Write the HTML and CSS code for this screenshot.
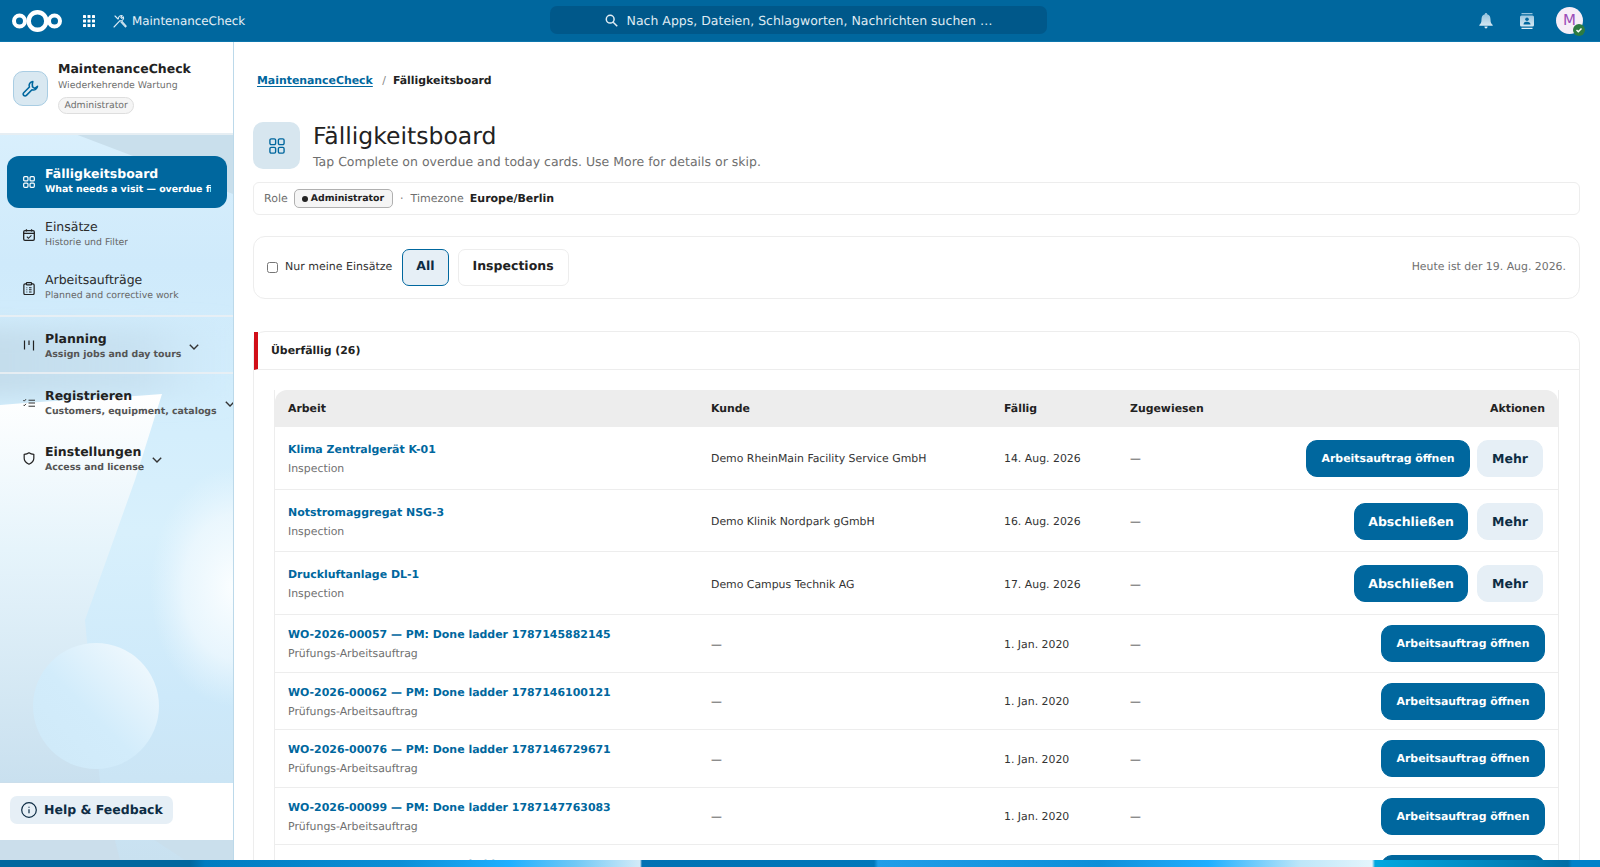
FILE: index.html
```html
<!DOCTYPE html>
<html lang="de">
<head>
<meta charset="utf-8">
<title>Fälligkeitsboard - MaintenanceCheck</title>
<link rel="stylesheet" href="styles.css">
</head>
<body>
<header class="topbar">
  <div class="top-left">
    <svg class="logo" width="52" height="26" viewBox="0 0 52 26"><g fill="none" stroke="#fff"><circle cx="8.500" cy="13" r="5.500" stroke-width="4"/><circle cx="26.500" cy="13" r="8.800" stroke-width="4.400"/><circle cx="43.500" cy="13" r="5.500" stroke-width="4"/></g></svg>
    <svg class="apps" width="12" height="12" viewBox="0 0 12 12" fill="#fff"><rect width="3" height="3" rx=".6"/><rect x="4.500" width="3" height="3" rx=".6"/><rect x="9" width="3" height="3" rx=".6"/><rect y="4.500" width="3" height="3" rx=".6"/><rect x="4.500" y="4.500" width="3" height="3" rx=".6"/><rect x="9" y="4.500" width="3" height="3" rx=".6"/><rect y="9" width="3" height="3" rx=".6"/><rect x="4.500" y="9" width="3" height="3" rx=".6"/><rect x="9" y="9" width="3" height="3" rx=".6"/></svg>
    <span class="app-name">
      <svg width="14" height="14" viewBox="0 0 14 14" fill="none" stroke="#dcebf4" stroke-width="1.100" stroke-linecap="round" stroke-linejoin="round"><path d="M1 13 7 6.600M5.400 4.600a3 3 0 0 1 3.900-2.900L7.800 3.400l1 1 1.600-1.500a3 3 0 0 1-3 4"/><path d="M8 8.200 12.400 13l.8-.8L9 7.400M2 2l3 3"/></svg>
      MaintenanceCheck
    </span>
  </div>
  <div class="search">
    <svg width="13" height="13" viewBox="0 0 14 14" fill="none" stroke="#e3eef5" stroke-width="1.600"><circle cx="5.600" cy="5.600" r="4.200"/><path d="m8.800 8.800 4.400 4.400"/></svg>
    <span>Nach Apps, Dateien, Schlagworten, Nachrichten suchen …</span>
  </div>
  <div class="top-right">
    <svg width="14" height="16" viewBox="0 0 14 16"><defs><linearGradient id="fade" x1="0" y1="0" x2="0" y2="1"><stop offset="0" stop-color="#8fc0dc"/><stop offset="1" stop-color="#e4f0f7"/></linearGradient></defs><path fill="url(#fade)" d="M7 0c.8 0 1.200.5 1.200 1.200C10.600 1.800 11.500 3.800 11.500 6.500c0 3 .8 4.300 2.200 5.500v.8H.3V12c1.400-1.200 2.200-2.500 2.200-5.500 0-2.700.9-4.700 3.300-5.300C5.800.5 6.200 0 7 0ZM5.400 13.600h3.200C8.500 14.900 7.800 15.500 7 15.500s-1.500-.6-1.600-1.900Z"/></svg>
    <svg width="14" height="16" viewBox="0 0 14 16"><defs><linearGradient id="fade2" x1="0" y1="0" x2="0" y2="1"><stop offset="0" stop-color="#8fc0dc"/><stop offset="1" stop-color="#e4f0f7"/></linearGradient></defs><path fill="url(#fade2)" d="M1.500 0h11v1.300h-11zM1.500 2.600h11A1.500 1.500 0 0 1 14 4.100v7.800a1.500 1.500 0 0 1-1.500 1.500h-11A1.500 1.500 0 0 1 0 11.900V4.100a1.500 1.500 0 0 1 1.500-1.500ZM1.500 14.700h11V16h-11z"/><circle cx="7" cy="6.200" r="1.800" fill="#00679e"/><path d="M3.500 11.500c0-1.900 1.600-2.800 3.500-2.800s3.500.9 3.500 2.800z" fill="#00679e"/></svg>
    <div class="avatar">M<span class="status"><svg width="8" height="8" viewBox="0 0 8 8" fill="none" stroke="#fff" stroke-width="1.400"><path d="m1.500 4 1.800 1.800 3.200-3.400"/></svg></span></div>
  </div>
</header>

<div class="content">
  <aside class="sidebar">
    <svg class="sidebar-art" viewBox="0 0 233 818" preserveAspectRatio="none" aria-hidden="true">
      <defs>
        <linearGradient id="sb" x1="0" y1="0" x2="0" y2="1"><stop offset="0" stop-color="#e0f3fd"/><stop offset=".27" stop-color="#cfeafb"/><stop offset=".42" stop-color="#d2edfc"/><stop offset=".6" stop-color="#d8f0fc"/><stop offset=".8" stop-color="#cde9fa"/><stop offset="1" stop-color="#c9e1f0"/></linearGradient>
        <radialGradient id="lobe"><stop offset="0" stop-color="#fbfeff"/><stop offset=".6" stop-color="#f0f9fe" stop-opacity=".75"/><stop offset="1" stop-color="#e8f6fe" stop-opacity="0"/></radialGradient>
        <linearGradient id="sw" x1="0" y1="0" x2="0" y2="1"><stop offset="0" stop-color="#ffffff"/><stop offset=".4" stop-color="#e6f4fb"/><stop offset="1" stop-color="#c9e0ef"/></linearGradient>
        <linearGradient id="sc" x1="1" y1="0" x2="0" y2="1"><stop offset="0" stop-color="#f6fbfe"/><stop offset=".55" stop-color="#d2ecfb"/><stop offset="1" stop-color="#cfe9f8"/></linearGradient>
        <linearGradient id="band" x1="0" y1="0" x2="1" y2="0"><stop offset="0" stop-color="#c3dceb"/><stop offset=".65" stop-color="#c6dfef" stop-opacity=".8"/><stop offset="1" stop-color="#cfe9f9" stop-opacity=".1"/></linearGradient>
        <filter id="soft" x="-20%" y="-40%" width="140%" height="180%"><feGaussianBlur stdDeviation="11"/></filter>
      </defs>
      <rect width="233" height="818" fill="url(#sb)"/>
      <ellipse cx="235" cy="545" rx="85" ry="120" fill="url(#lobe)"/>
      <path d="M75 92 233 152V92Z" fill="#c9dfec"/>
      <path d="M-30 285H233V355H-30Z" fill="url(#band)" filter="url(#soft)"/>
      <path d="M0 363C60 358 110 356 162 352L135 438 85 578 100 740H0Z" fill="url(#sw)"/>
      <circle cx="96" cy="664" r="63" fill="url(#sc)"/>
      <path d="M0 740H100L120 818H0Z" fill="#cbdeeb"/>
      <path d="M150 795 185 818H233V795Z" fill="#cadfec"/>
    </svg>

    <div class="brand">
      <div class="brand-icon"><svg width="17" height="17" viewBox="0 0 17 17" fill="none" stroke="#00679e" stroke-width="1.600" stroke-linejoin="round"><path d="M10.800 1.500a4 4 0 0 0-3.400 5.500L1.700 12.700a1.900 1.900 0 0 0 2.700 2.700L10 9.700a4 4 0 0 0 5.500-3.400l-2.800 2-2.200-1.500-.2-2.700z"/></svg></div>
      <div class="brand-text">
        <div class="brand-title">MaintenanceCheck</div>
        <div class="brand-sub">Wiederkehrende Wartung</div>
        <span class="brand-pill">Administrator</span>
      </div>
    </div>

    <nav class="nav">
      <a class="nav-item active">
        <svg class="nav-icon" height="12" viewBox="0 0 14 14" fill="none" stroke="currentColor" stroke-width="1.400"><rect x=".8" y=".8" width="5" height="5" rx="1.200"/><rect x="8.200" y=".8" width="5" height="5" rx="1.200"/><rect x=".8" y="8.200" width="5" height="5" rx="1.200"/><rect x="8.200" y="8.200" width="5" height="5" rx="1.200"/></svg>
        <span class="nav-text"><b>Fälligkeitsboard</b><small>What needs a visit — overdue first</small></span>
      </a>
      <a class="nav-item">
        <svg class="nav-icon" height="12" viewBox="0 0 14 14" fill="none" stroke="currentColor" stroke-width="1.500"><rect x=".8" y="2" width="12.400" height="11.200" rx="1.500"/><path d="M.8 5.200h12.400M4 .3v2.600M10 .3v2.600"/><path d="m4.500 9 1.800 1.800L9.800 7.500" stroke-width="1.200"/></svg>
        <span class="nav-text"><span class="nav-title">Einsätze</span><small>Historie und Filter</small></span>
      </a>
      <a class="nav-item">
        <svg class="nav-icon" height="13" viewBox="0 0 14 15" fill="none" stroke="currentColor" stroke-width="1.400"><path d="M4 2H2.500A1.500 1.500 0 0 0 1 3.500v9.500A1.500 1.500 0 0 0 2.500 14.500h9a1.500 1.500 0 0 0 1.500-1.500V3.500A1.500 1.500 0 0 0 11.500 2H10"/><rect x="4" y=".7" width="6" height="2.600" rx=".8"/><path d="M4 6.500h1M7 6.500h3M4 9h1M7 9h3M4 11.500h1M7 11.500h3" stroke-width="1.200"/></svg>
        <span class="nav-text"><span class="nav-title">Arbeitsaufträge</span><small>Planned and corrective work</small></span>
      </a>
      <a class="nav-group sep">
        <svg class="nav-icon" height="11" viewBox="0 0 11 11" fill="none" stroke="currentColor" stroke-width="1.200"><path d="M1 .5v9M5.500.5v4.500M10 .5v10"/></svg>
        <span class="nav-text"><b>Planning</b><small>Assign jobs and day tours</small></span>
        <svg class="chev" width="10" height="6" viewBox="0 0 10 6" fill="none" stroke="currentColor" stroke-width="1.400"><path d="m.8.8 4.200 4.200L9.200.8"/></svg>
      </a>
      <a class="nav-group sep">
        <svg class="nav-icon" height="10" viewBox="0 0 13 9" fill="none" stroke="currentColor" stroke-width="1"><path d="m.4 1.500 1 1L3.200.4M.4 6.500l1 1 1.800-2.100M6 1.500h7M6 4.500h7M6 8h7"/></svg>
        <span class="nav-text"><b>Registrieren</b><small>Customers, equipment, catalogs</small></span>
        <svg class="chev" width="10" height="6" viewBox="0 0 10 6" fill="none" stroke="currentColor" stroke-width="1.400"><path d="m.8.8 4.200 4.200L9.200.8"/></svg>
      </a>
      <a class="nav-group">
        <svg class="nav-icon" height="13" viewBox="0 0 12 14" fill="none" stroke="currentColor" stroke-width="1.300" stroke-linejoin="round"><path d="M6 .8c1.500 1.100 3.200 1.600 5.200 1.700v4.300c0 3-2 5-5.200 6.400C2.800 11.800.8 9.800.8 6.800V2.500C2.800 2.400 4.500 1.900 6 .8Z"/></svg>
        <span class="nav-text"><b>Einstellungen</b><small>Access and license</small></span>
        <svg class="chev" width="10" height="6" viewBox="0 0 10 6" fill="none" stroke="currentColor" stroke-width="1.400"><path d="m.8.8 4.200 4.200L9.200.8"/></svg>
      </a>
    </nav>

    <div class="help">
      <a class="help-btn">
        <svg width="16" height="16" viewBox="0 0 16 16" fill="none" stroke="#0d2c44" stroke-width="1.200"><circle cx="8" cy="8" r="7.300"/><path d="M8 7.200v4M8 4.700v1.100"/></svg>
        Help &amp; Feedback
      </a>
    </div>
  </aside>

  <main class="main">
    <div class="crumbs"><a class="crumb-link">MaintenanceCheck</a><span class="crumb-sep">/</span><b>Fälligkeitsboard</b></div>

    <div class="page-head">
      <div class="page-icon"><svg width="16" height="16" viewBox="0 0 14 14" fill="none" stroke="#00679e" stroke-width="1.200"><rect x=".8" y=".8" width="5" height="5" rx="1.200"/><rect x="8.200" y=".8" width="5" height="5" rx="1.200"/><rect x=".8" y="8.200" width="5" height="5" rx="1.200"/><rect x="8.200" y="8.200" width="5" height="5" rx="1.200"/></svg></div>
      <div>
        <h1>Fälligkeitsboard</h1>
        <p>Tap Complete on overdue and today cards. Use More for details or skip.</p>
      </div>
    </div>

    <div class="role-bar">
      <span class="muted">Role</span>
      <span class="role-pill"><i></i>Administrator</span>
      <span class="muted dot">·</span>
      <span class="muted">Timezone</span>
      <b>Europe/Berlin</b>
    </div>

    <div class="filter-card">
      <label class="check"><input type="checkbox"><span>Nur meine Einsätze</span></label>
      <button class="tab on">All</button>
      <button class="tab">Inspections</button>
      <span class="today">Heute ist der 19. Aug. 2026.</span>
    </div>

    <section class="section">
      <h2>Überfällig (26)</h2>
      <div class="table-wrap">
        <table>
          <colgroup><col class="c1"><col class="c2"><col class="c3"><col class="c4"><col></colgroup>
          <thead><tr><th>Arbeit</th><th>Kunde</th><th>Fällig</th><th>Zugewiesen</th><th class="right">Aktionen</th></tr></thead>
          <tbody>
            <tr class="tall">
              <td><a class="job">Klima Zentralgerät K-01</a><span class="kind">Inspection</span></td>
              <td>Demo RheinMain Facility Service GmbH</td><td>14. Aug. 2026</td><td>—</td>
              <td class="right"><button class="btn small">Arbeitsauftrag öffnen</button><button class="btn more">Mehr</button></td>
            </tr>
            <tr class="tall">
              <td><a class="job">Notstromaggregat NSG-3</a><span class="kind">Inspection</span></td>
              <td>Demo Klinik Nordpark gGmbH</td><td>16. Aug. 2026</td><td>—</td>
              <td class="right"><button class="btn">Abschließen</button><button class="btn more">Mehr</button></td>
            </tr>
            <tr class="tall">
              <td><a class="job">Druckluftanlage DL-1</a><span class="kind">Inspection</span></td>
              <td>Demo Campus Technik AG</td><td>17. Aug. 2026</td><td>—</td>
              <td class="right"><button class="btn">Abschließen</button><button class="btn more">Mehr</button></td>
            </tr>
            <tr>
              <td><a class="job">WO-2026-00057 — PM: Done ladder 1787145882145</a><span class="kind">Prüfungs-Arbeitsauftrag</span></td>
              <td>—</td><td>1. Jan. 2020</td><td>—</td>
              <td class="right"><button class="btn small">Arbeitsauftrag öffnen</button></td>
            </tr>
            <tr>
              <td><a class="job">WO-2026-00062 — PM: Done ladder 1787146100121</a><span class="kind">Prüfungs-Arbeitsauftrag</span></td>
              <td>—</td><td>1. Jan. 2020</td><td>—</td>
              <td class="right"><button class="btn small">Arbeitsauftrag öffnen</button></td>
            </tr>
            <tr>
              <td><a class="job">WO-2026-00076 — PM: Done ladder 1787146729671</a><span class="kind">Prüfungs-Arbeitsauftrag</span></td>
              <td>—</td><td>1. Jan. 2020</td><td>—</td>
              <td class="right"><button class="btn small">Arbeitsauftrag öffnen</button></td>
            </tr>
            <tr>
              <td><a class="job">WO-2026-00099 — PM: Done ladder 1787147763083</a><span class="kind">Prüfungs-Arbeitsauftrag</span></td>
              <td>—</td><td>1. Jan. 2020</td><td>—</td>
              <td class="right"><button class="btn small">Arbeitsauftrag öffnen</button></td>
            </tr>
            <tr>
              <td><a class="job">WO-2026-00102 — PM: Done ladder 1787147981234</a><span class="kind">Prüfungs-Arbeitsauftrag</span></td>
              <td>—</td><td>1. Jan. 2020</td><td>—</td>
              <td class="right"><button class="btn small">Arbeitsauftrag öffnen</button></td>
            </tr>
          </tbody>
        </table>
      </div>
    </section>
  </main>
</div>
<div class="strip"></div>
</body>
</html>
```

FILE: styles.css
```css
* { box-sizing: border-box; }
html, body { margin: 0; height: 100%; }
body {
  display: flex;
  flex-direction: column;
  height: 867px;
  overflow: hidden;
  font-family: "DejaVu Sans", sans-serif;
  text-rendering: geometricPrecision;
  color: #222;
  background: #fff;
}
button { font-family: inherit; text-rendering: inherit; }

.topbar {
  flex: 0 0 42px;
  height: 42px;
  display: grid;
  grid-template-columns: 550px 497px 1fr;
  align-items: center;
  background: #00679e;
  color: #fff;
  border-bottom: 1px solid #0c76ad;
}
.top-left { display: flex; align-items: center; padding-left: 11px; }
.logo { margin-right: 20px; }
.apps { margin-right: 18px; }
.app-name { display: flex; align-items: center; gap: 5px; font-size: 11.900px; color: #e6f0f6; }
.search {
  height: 28px;
  margin-top: -1px;
  background: #00588a;
  border-radius: 7px;
  display: flex;
  align-items: center;
  justify-content: center;
  gap: 9px;
  font-size: 12.500px;
  color: #dfeaf2;
}
.top-right { display: flex; align-items: center; justify-content: flex-end; gap: 27px; padding-right: 17px; }
.avatar {
  position: relative;
  width: 27px;
  height: 27px;
  margin-left: -5px;
  border-radius: 50%;
  background: #f6eef8;
  color: #9c4fb8;
  font-size: 15px;
  text-align: center;
  line-height: 27px;
}
.status {
  position: absolute;
  right: -2px;
  bottom: -2px;
  width: 12px;
  height: 12px;
  border-radius: 50%;
  background: #2d7b41;
  display: flex;
  align-items: center;
  justify-content: center;
}

.content { flex: 1; display: flex; min-height: 0; }

.sidebar {
  position: relative;
  flex: 0 0 234px;
  width: 234px;
  display: flex;
  flex-direction: column;
  overflow: hidden;
  border-right: 1px solid #bcd9ea;
}
.sidebar-art { position: absolute; inset: 0; width: 233px; height: 818px; }

.brand {
  position: relative;
  height: 93px;
  flex: none;
  background: #fff;
  border-bottom: 2px solid #e6eef3;
  display: flex;
  padding: 18px 0 0 13px;
  gap: 10px;
}
.brand-icon {
  width: 35px;
  height: 35px;
  margin-top: 11px;
  border-radius: 10px;
  background: #d9e8f1;
  border: 1px solid #a9cde3;
  display: flex;
  align-items: center;
  justify-content: center;
}
.brand-title { font-size: 12.500px; font-weight: 700; line-height: 17px; color: #222; }
.brand-sub { font-size: 9.400px; line-height: 14px; margin-top: 2px; color: #6f6f6f; }
.brand-pill {
  display: inline-block;
  margin-top: 4px;
  padding: 0 5.500px;
  height: 17px;
  line-height: 15px;
  font-size: 9.300px;
  color: #6f6f6f;
  background: #f5f5f5;
  border: 1px solid #dedede;
  border-radius: 9px;
}

.nav { position: relative; flex: 1; padding-top: 21px; color: #222; }
.nav-item, .nav-group { display: flex; align-items: center; }
.nav-item { height: 52px; margin: 0 6px 1px 7px; padding-left: 15px; border-radius: 12px; }
.nav-group { height: 57px; padding-left: 22px; }
.nav-icon { flex: none; width: 12px; display: block; margin: 0 10px 0 1px; }
.nav-group .nav-icon { margin-top: 2px; }
.sep { border-top: 2px solid rgba(235, 240, 243, .85); }
.nav-item.active { background: #00679e; color: #fff; }
.nav-text { display: flex; flex-direction: column; min-width: 0; white-space: nowrap; overflow: hidden; }
.nav-item .nav-text { padding-bottom: 4px; }
.nav-group .nav-text { padding-top: 2px; }
.active .nav-text { width: 166px; }
.nav-text b { font-size: 12.500px; line-height: 18px; }
.nav-title { font-size: 12.500px; line-height: 18px; color: #2b2b2b; }
.nav-text small { font-size: 9.400px; line-height: 13px; color: #666; }
.nav-text b + small { font-weight: 700; color: #555; }
.active .nav-text b + small { color: #fff; }
.nav-group .nav-text { overflow: visible; flex: none; }
.chev { flex: none; margin: 4px 0 0 8px; color: #333; }

.help {
  position: relative;
  flex: none;
  height: 57px;
  margin-bottom: 20px;
  padding: 0 0 4px 10px;
  background: #fff;
  display: flex;
  align-items: center;
}
.help-btn {
  display: flex;
  align-items: center;
  gap: 7px;
  width: 163px;
  height: 28px;
  padding-left: 11px;
  border-radius: 7px;
  background: #e6eff6;
  color: #0d2c44;
  font-size: 12.500px;
  font-weight: 700;
}

.main { flex: 1; min-width: 0; overflow: hidden; padding: 0 20px 0 19px; background: #fff; }
.crumbs { display: flex; align-items: center; height: 16px; margin: 30px 0 0 4px; font-size: 10.900px; }
.crumb-link { color: #00679e; font-weight: 700; text-decoration: underline; text-underline-offset: 2px; }
.crumb-sep { margin: 0 7px 0 9.500px; color: #888; }
.page-head { display: flex; gap: 13px; margin-top: 34px; }
.page-icon {
  width: 47px;
  height: 47px;
  border-radius: 10px;
  background: #d7e6ef;
  display: flex;
  align-items: center;
  justify-content: center;
  flex: none;
}
h1 { margin: 0; font-size: 23.500px; font-weight: 400; line-height: 28px; color: #222; }
p { margin: 4px 0 -1px; font-size: 12.500px; line-height: 16px; color: #6f6f6f; }

.role-bar {
  height: 33px;
  margin-top: 13px;
  display: flex;
  align-items: center;
  padding-left: 10px;
  border: 1px solid #ededed;
  border-radius: 6px;
  font-size: 11px;
}
.role-bar b { margin-left: 6px; }
.muted { color: #6f6f6f; }
.dot { margin: 0 7px; }
.role-pill {
  display: inline-flex;
  align-items: center;
  gap: 3px;
  height: 19px;
  margin-left: 6px;
  padding: 0 8px 0 7px;
  font-size: 9.400px;
  font-weight: 700;
  border: 1px solid #b0b0b0;
  border-radius: 5px;
  background: #f5f5f5;
  color: #222;
}
.role-pill i { width: 6px; height: 6px; border-radius: 50%; background: #222; }

.filter-card {
  height: 63px;
  margin-top: 21px;
  display: flex;
  align-items: center;
  padding: 0 13px 1px 13px;
  border: 1px solid #ededed;
  border-radius: 12px;
}
.check { display: flex; align-items: center; gap: 6px; margin-bottom: 2px; font-size: 11px; color: #333; }
.check input { width: 11px; height: 11px; margin: 2px 1px 0 0; }
.tab {
  height: 37px;
  margin-left: 10px;
  padding: 0 14px 4px;
  background: #fff;
  border: 1px solid #ededed;
  border-radius: 7px;
  font-size: 12.500px;
  font-weight: 700;
  color: #222;
}
.tab.on { padding: 0 13px 4px; background: #e6eff6; border-color: #00679e; color: #0d2c44; }
.tab + .tab { margin-left: 9px; }
.today { margin: 0 0 2px auto; font-size: 10.900px; color: #6f6f6f; }

.section { margin-top: 32px; border: 1px solid #ededed; border-radius: 12px 12px 0 0; }
h2 {
  margin: 0;
  height: 38px;
  padding-left: 13px;
  display: flex;
  align-items: center;
  font-size: 10.900px;
  font-weight: 700;
  color: #222;
  border-left: 4px solid #d10e18;
  border-bottom: 1px solid #ededed;
}
.table-wrap { padding: 20px 20px 0; }
table {
  width: 100%;
  border-collapse: separate;
  border-spacing: 0;
  table-layout: fixed;
  font-size: 10.900px;
  color: #333;
  border-right: 1px solid #ededed;
  border-left: 1px solid #ededed;
}
.c1 { width: 423px; }
.c2 { width: 293px; }
.c3 { width: 126px; }
.c4 { width: 180px; }
th {
  height: 37px;
  padding: 0 13px;
  text-align: left;
  background: #ededed;
  font-size: 10.900px;
  color: #222;
}
th.right { text-align: right; }
th:first-child { border-top-left-radius: 12px; }
th:last-child { border-top-right-radius: 12px; }
td { height: 57.500px; padding: 2px 13px 0; border-bottom: 1px solid #ededed; white-space: nowrap; }
td:first-child { padding-top: 3px; }
tr.tall td { height: 62.700px; }
td.right { text-align: right; padding: 1px 13px 0 0; }
tr.tall td.right { padding-right: 15px; }
.job { display: block; font-size: 10.950px; font-weight: 700; color: #00679e; line-height: 14px; }
.kind { display: block; margin-top: 5px; font-size: 10.900px; color: #6f6f6f; line-height: 14px; }
.btn {
  height: 37px;
  padding: 0 13px;
  border: 1px solid #00679e;
  border-radius: 11px;
  background: #00679e;
  color: #fff;
  font-size: 12.500px;
  font-weight: 700;
  vertical-align: middle;
}
.btn.small { padding: 0 14.500px; font-size: 10.900px; }
.btn.more { margin-left: 9px; padding: 0 14px; background: #e6eff6; border-color: #e6eff6; color: #0d2c44; }
.btn.small + .btn.more { margin-left: 7px; }

.strip {
  flex: 0 0 7px;
  background: linear-gradient(90deg,
    #00679e 0, #00679e 190px, #007cc0 205px, #0b8fd6 400px, #1fb0ff 510px, #70c8f5 575px, #d3ebf8 640px,
    #0072b3 642px, #0078ba 874px,
    #1f9ee8 878px, #0e8fd8 1100px, #1fafff 1208px, #bde6f8 1300px, #e4f5fc 1372px,
    #00a8df 1375px, #0090c8 1460px, #006ea5 1568px, #0082c9 1572px, #0082c9 1600px);
}
```
